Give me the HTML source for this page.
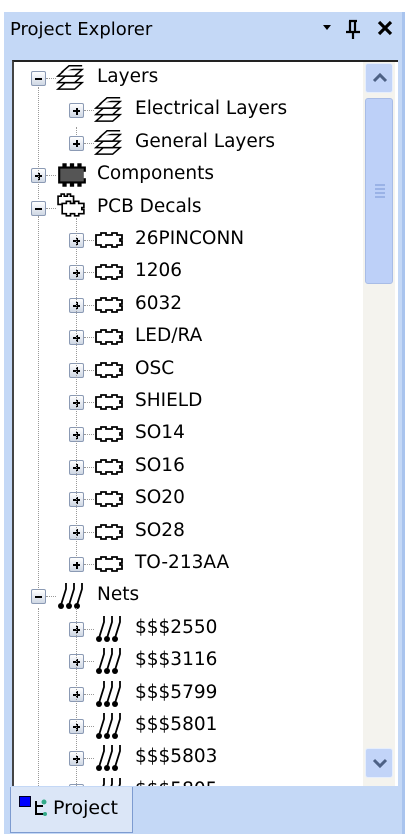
<!DOCTYPE html>
<html><head><meta charset="utf-8"><style>
*{margin:0;padding:0;box-sizing:border-box}
body{width:419px;height:840px;background:#fff;position:relative;overflow:hidden;font-family:"DejaVu Sans","Liberation Sans",sans-serif}
#panel{position:absolute;left:4px;top:12px;width:401px;height:822px;background:#c4d8f6;border-right:3px solid #a9c4ee}
#title{position:absolute;left:10px;top:19px;font-size:18px;color:#000;font-family:"DejaVu Sans",sans-serif}
#tree{position:absolute;left:12px;top:60px;width:386px;height:726px;background:#fff;border-top:2px solid #222;border-left:2px solid #444;overflow:hidden}
.row{position:absolute;height:30px;font-size:18.5px;line-height:30px;color:#000;white-space:nowrap}
.box{position:absolute;width:15px;height:15px;border:1px solid #8b9ab4;background:linear-gradient(#fff,#cfd7e4);border-radius:2px}
.box:before{content:"";position:absolute;left:3px;top:6px;width:7px;height:2px;background:#000}
.box.p:after{content:"";position:absolute;left:5.5px;top:3.5px;width:2px;height:7px;background:#000}
.vd{position:absolute;border-left:1px dotted #999;width:0}
.hd{position:absolute;border-top:1px dotted #999;height:0;width:10px}
.ic{position:absolute}
#sb{position:absolute;left:349px;top:0;width:32px;height:726px;background:#f4f3ee}
.btn{position:absolute;left:2px;width:28px;height:30px;background:#c2d4f8;border:1px solid #e6eefc;border-radius:3px}
#thumb{position:absolute;left:2px;top:36px;width:28px;height:186px;background:#bdd0f8;border:1px solid #a8bce6;border-radius:3px}
#tab{position:absolute;left:10px;top:787px;width:123px;height:46px;background:#dbe6f7;border:1px solid #7d9bd0;border-top:none}
</style></head><body>
<svg width="0" height="0" style="position:absolute">
<defs>
<symbol id="lay" viewBox="0 0 30 32"><g fill="#fff" stroke="#000" stroke-width="1.6"><path d="M2 29 L10 22 L28 22 L20 29 Z"/><path d="M2 22 L10 15 L28 15 L20 22 Z"/><path d="M2 15 L10 8 L28 8 L20 15 Z"/><path d="M6 11 L14 4 L28 4"/></g></symbol>
<symbol id="comp" viewBox="0 0 30 24"><rect x="3" y="5" width="24" height="14" fill="#555" stroke="#000" stroke-width="2"/><g fill="#000"><rect x="6" y="1" width="4" height="4"/><rect x="13" y="1" width="4" height="4"/><rect x="20" y="1" width="4" height="4"/><rect x="6" y="19" width="4" height="4"/><rect x="13" y="19" width="4" height="4"/><rect x="20" y="19" width="4" height="4"/></g><rect x="26" y="9" width="4" height="6" fill="#fff"/></symbol>
<symbol id="dec" viewBox="0 0 30 16"><path d="M2 3 h5 v-2 h5 v2 h6 v-2 h5 v2 h5 v4 h-2 v2 h2 v4 h-5 v2 h-5 v-2 h-6 v2 h-5 v-2 h-5 Z" fill="#fff" stroke="#000" stroke-width="1.8"/></symbol>
<symbol id="dec0" viewBox="0 0 30 26"><path d="M2 3 h3 v-2 h3 v2 h3 v-2 h3 v2 h3 v8 h-15 Z" fill="#fff" stroke="#000" stroke-width="1.6"/><path d="M6 10 h4 v-2 h4 v2 h4 v-2 h4 v2 h5 v4 h-2 v2 h2 v4 h-5 v2 h-4 v-2 h-4 v2 h-4 v-2 h-4 Z" fill="#fff" stroke="#000" stroke-width="1.6"/></symbol>
<symbol id="net" viewBox="0 0 30 30"><g stroke="#000" stroke-width="1.8" fill="none"><path d="M10 2 V8 L5 24"/><path d="M18 2 V8 L13 24"/><path d="M26 2 V8 L21 24"/></g><g fill="#000"><circle cx="5" cy="25" r="3"/><circle cx="13" cy="25" r="3"/><circle cx="21" cy="25" r="3"/></g></symbol>
</defs></svg>
<div id="panel"></div>
<div id="title">Project Explorer</div>
<div style="position:absolute;left:323px;top:25px;width:0;height:0;border-left:4px solid transparent;border-right:4px solid transparent;border-top:5px solid #000"></div>
<svg style="position:absolute;left:343px;top:18px" width="20" height="22"><path d="M6 3 H14 M7 3 V14 M12 3 V14 M3 14 H17 M10 14 V21" stroke="#000" stroke-width="2.2" fill="none"/></svg>
<svg style="position:absolute;left:376px;top:19px" width="18" height="18"><path d="M3 3 L15 15 M15 3 L3 15" stroke="#000" stroke-width="3.2"/></svg>
<div id="tree">
<div id="rows"></div>
<div id="sb">
<div class="btn" style="top:1px"><svg width="28" height="28"><path d="M8 17 L14 11 L20 17" stroke="#4d6185" stroke-width="3" fill="none"/></svg></div>
<div id="thumb"><svg width="28" height="186"><g stroke="#8fa8e0" stroke-width="1.5"><line x1="9" y1="86" x2="19" y2="86"/><line x1="9" y1="90" x2="19" y2="90"/><line x1="9" y1="94" x2="19" y2="94"/><line x1="9" y1="98" x2="19" y2="98"/></g></svg></div>
<div class="btn" style="top:686px"><svg width="28" height="28"><path d="M8 11 L14 17 L20 11" stroke="#4d6185" stroke-width="3" fill="none"/></svg></div>
</div>
</div>
<div id="tab"><div style="position:absolute;left:8px;top:9px;width:12px;height:11px;background:#00f;border:1px solid #002"></div>
<svg style="position:absolute;left:20px;top:8px" width="18" height="24"><path d="M5 6 V19 H14 M5 11 H12" stroke="#000" stroke-width="2" fill="none"/><circle cx="13" cy="7" r="2.5" fill="#3a8"/><circle cx="14" cy="19" r="2" fill="#3a8"/></svg>
<div style="position:absolute;left:42px;top:10px;font-size:19px;font-family:'DejaVu Sans',sans-serif">Project</div></div>
<script>
var R=[[0,'m','lay','Layers'],[1,'p','lay','Electrical Layers'],[1,'p','lay','General Layers'],[0,'p','comp','Components'],[0,'m','dec0','PCB Decals']];
['26PINCONN','1206','6032','LED/RA','OSC','SHIELD','SO14','SO16','SO20','SO28','TO-213AA'].forEach(function(t){R.push([1,'p','dec',t])});
R.push([0,'m','net','Nets']);
['$$$2550','$$$3116','$$$5799','$$$5801','$$$5803','$$$5805'].forEach(function(t){R.push([1,'p','net',t])});
var h='',ox=14,oy=62;
R.forEach(function(r,i){
 var cy=78+i*32.4-oy; var bx=(r[0]?76:38)-ox;
 h+='<div class="box '+r[1]+'" style="left:'+(bx-7)+'px;top:'+(cy-7)+'px"></div>';
 h+='<div class="hd" style="left:'+(bx+8)+'px;top:'+cy+'px"></div>';
 var ix=bx+18, s=r[2];
 var dims={lay:[28,32,-17],comp:[32,26,-13],dec:[30,16,-8],dec0:[31,27,-15],net:[30,30,-15]}[s];
 h+='<svg class="ic" style="left:'+ix+'px;top:'+(cy+dims[2])+'px" width="'+dims[0]+'" height="'+dims[1]+'"><use href="#'+s+'"/></svg>';
 h+='<div class="row" style="left:'+(bx+59)+'px;top:'+(cy-16)+'px">'+r[3]+'</div>';
});
function v(x,y1,y2){h+='<div class="vd" style="left:'+(x-ox)+'px;top:'+(y1-oy)+'px;height:'+(y2-y1)+'px"></div>';}
v(38,87,199);v(38,216,590);v(38,608,790);v(76,127,135);v(76,218,558);v(76,608,790);
document.getElementById('rows').innerHTML=h;
</script>
</body></html>
